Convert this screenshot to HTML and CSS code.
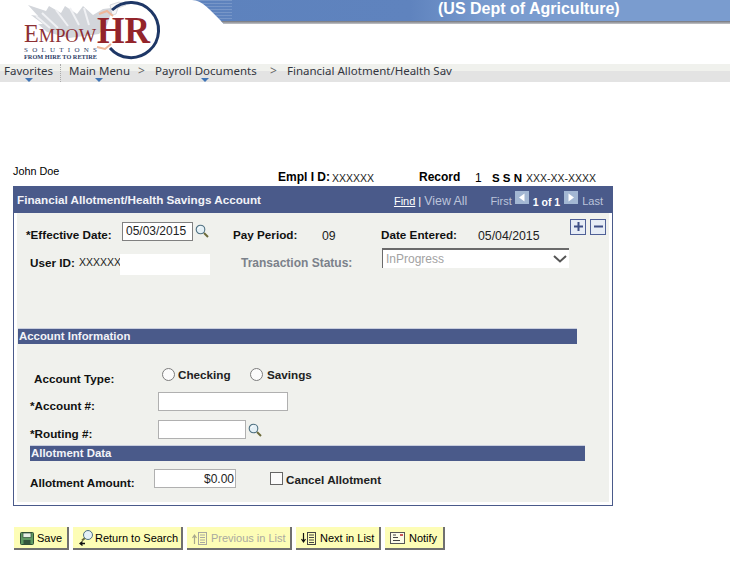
FILE: index.html
```html
<!DOCTYPE html>
<html lang="en">
<head>
<meta charset="utf-8">
<title>Financial Allotment/Health Savings Account</title>
<link rel="stylesheet" href="styles.css">
</head>
<body>
<svg class="defs" width="0" height="0" aria-hidden="true">
  <symbol id="mag" viewBox="0 0 14 14">
    <line x1="9" y1="9" x2="13" y2="13" stroke="#6b6a3a" stroke-width="2"/>
    <circle cx="5.500" cy="5.500" r="4.300" fill="#e4f0f6" stroke="#4d6f80" stroke-width="1.100"/>
    <path d="M3 5a3 3 0 0 1 2.500-2.200" fill="none" stroke="#fff" stroke-width="1"/>
  </symbol>
</svg>

<header class="top">
  <svg class="logo" width="190" height="64" viewBox="0 0 190 64">
    <path class="lg-wing" d="M28 5l18 6 3-5 12 7 4-7 12 8 6-8 10 9 10-6 8-1 6 3-7 5-3 9-8 9-30 4-22-6-9-8 5 0-12-9 7 1z" fill="#d3d6db"/>
    <path class="lg-wing" d="M42 13l16 15M56 10l12 16M70 8l9 17M84 8l5 17M36 16l14 12" stroke="#f0f1f4" stroke-width="2" fill="none"/>
    <path d="M110 5l9-3 7 3-8 3-2 6-4 1z" fill="#f6f6f7" stroke="#c9ccd2" stroke-width=".7"/>
    <path d="M112 10A27.600 27.600 0 1 1 110 48" fill="none" stroke="#1e3766" stroke-width="3"/>
    <path d="M99 14l8-3 6 5M97 47l8 2 6-5" stroke="#eeb79a" stroke-width="2" fill="none"/>
    <text class="lg-empow" x="24" y="42" textLength="72" lengthAdjust="spacingAndGlyphs">E<tspan class="lg-small">MPOW</tspan></text>
    <text class="lg-hr" x="97" y="43" textLength="53" lengthAdjust="spacingAndGlyphs">HR</text>
    <text class="lg-sol" x="24" y="52" textLength="73">SOLUTIONS</text>
    <text class="lg-tag" x="24" y="59" textLength="73" lengthAdjust="spacingAndGlyphs">FROM HIRE TO RETIRE</text>
  </svg>
  <div class="banner"><span class="banner-text">(US Dept of Agriculture)</span></div>
</header>

<nav class="crumbs">
  <span class="crumb c-fav">Favorites<i class="caret"></i></span>
  <span class="crumb c-main">Main Menu<i class="caret"></i></span>
  <span class="sep s-1">&gt;</span>
  <span class="crumb c-pay">Payroll Documents<i class="caret"></i></span>
  <span class="sep s-2">&gt;</span>
  <span class="crumb c-fin">Financial Allotment/Health Sav</span>
</nav>

<main class="page">
  <div class="ident">
    <span class="john">John Doe</span>
    <b class="id-empl">Empl I D:</b>
    <span class="id-val v-empl">XXXXXX</span>
    <b class="id-rec">Record</b>
    <span class="id-num">1</span>
    <b class="id-ssn">S S N</b>
    <span class="id-val">XXX-XX-XXXX</span>
  </div>

  <section class="panel">
    <div class="title">
      <span class="title-text">Financial Allotment/Health Savings Account</span>
      <span class="pager">
        <a class="p-find">Find</a><span class="p-bar">|</span><span class="p-dim p-view">View All</span>
        <span class="p-dim p-first">First</span>
        <span class="p-arrow p-a1"><svg width="14" height="13" viewBox="0 0 14 13"><path d="M9.500 2.500v8L4 6.500z" fill="#fff"/></svg></span>
        <b class="p-count">1 of 1</b>
        <span class="p-arrow p-a2"><svg width="14" height="13" viewBox="0 0 14 13"><path d="M4.500 2.500v8l5.500-4z" fill="#fff"/></svg></span>
        <span class="p-dim p-last">Last</span>
      </span>
    </div>

    <div class="inner">
      <div class="row row-a">
        <label class="lbl w-eff">*Effective Date:</label>
        <input class="fld f-date" value="05/03/2015" readonly>
        <svg class="mag m-date" width="14" height="14"><use href="#mag"/></svg>
        <label class="lbl w-pay">Pay Period:</label>
        <span class="val w-09">09</span>
        <label class="lbl w-ent">Date Entered:</label>
        <span class="val w-dat">05/04/2015</span>
        <span class="tool tool-plus"><svg width="13" height="13" viewBox="0 0 13 13"><path d="M2 6.500h9M6.500 2v9" stroke="#3e4f86" stroke-width="2"/></svg></span>
        <span class="tool tool-minus"><svg width="13" height="13" viewBox="0 0 13 13"><path d="M2 6.500h9" stroke="#3e4f86" stroke-width="2"/></svg></span>
      </div>

      <div class="row row-b">
        <label class="lbl w-uid">User ID:</label>
        <span class="mask w-uval">XXXXXX</span>
        <span class="blank"></span>
        <label class="lbl lbl-off w-ts">Transaction Status:</label>
        <div class="sel">InProgress<svg width="14" height="8" viewBox="0 0 14 8"><path d="M1 1l6 5.500L13 1" fill="none" stroke="#555" stroke-width="2"/></svg></div>
      </div>

      <h2 class="bar bar-acct">Account Information</h2>

      <div class="row row-type">
        <label class="lbl w-type">Account Type:</label>
        <span class="opt o-1"><input type="radio" class="radio" name="t"><b>Checking</b></span>
        <span class="opt o-2"><input type="radio" class="radio" name="t"><b>Savings</b></span>
      </div>

      <div class="row row-num r-acct">
        <label class="lbl w-num">*Account #:</label>
        <input class="fld f-acct" readonly>
      </div>
      <div class="row row-num r-rout">
        <label class="lbl w-num">*Routing #:</label>
        <input class="fld f-rout" readonly>
        <svg class="mag m-rout" width="14" height="14"><use href="#mag"/></svg>
      </div>

      <h2 class="bar bar-allot">Allotment Data</h2>

      <div class="row row-amt">
        <label class="lbl w-amt">Allotment Amount:</label>
        <input class="fld f-amt" value="$0.00" readonly>
        <input type="checkbox" class="check">
        <b class="check-lbl">Cancel Allotment</b>
      </div>
    </div>
  </section>

  <div class="actions">
    <button class="btn b-save">
      <svg width="14" height="13" viewBox="0 0 14 13"><rect x=".5" y=".5" width="13" height="12" rx="1" fill="#5f9a63" stroke="#2f4f36"/><rect x="3" y="1" width="8" height="4.500" fill="#e6efe6" stroke="#2f4f36" stroke-width=".7"/><rect x="3.500" y="8" width="7" height="4.500" fill="#33543c"/></svg>
      Save
    </button>
    <button class="btn b-ret">
      <svg width="15" height="16" viewBox="0 0 15 16"><line x1="6" y1="8" x2="3" y2="10.500" stroke="#6b6a3a" stroke-width="2"/><circle cx="9" cy="5" r="4.500" fill="#e4f0f6" stroke="#4d6f80"/><path d="M6 13.500H1.500M3.500 11.500l-2.500 2 2.500 2" fill="none" stroke="#111" stroke-width="1.300"/></svg>
      Return to Search
    </button>
    <button class="btn btn-off b-prev">
      <svg width="15" height="13" viewBox="0 0 15 13"><path d="M2.500 12V3.500M.5 6l2-3 2 3" fill="none" stroke="#a8a88c" stroke-width="1.200"/><rect x="6.500" y=".5" width="8" height="12" fill="none" stroke="#a8a8a0"/><path d="M8 3h5M8 5.500h5M8 8h5M8 10.500h5" stroke="#a8a8a0"/></svg>
      Previous in List
    </button>
    <button class="btn b-next">
      <svg width="15" height="13" viewBox="0 0 15 13"><path d="M2.500 1v8.500M.5 7l2 3 2-3" fill="none" stroke="#111" stroke-width="1.200"/><rect x="6.500" y=".5" width="8" height="12" fill="none" stroke="#444"/><path d="M8 3h5M8 5.500h5M8 8h5M8 10.500h5" stroke="#444"/></svg>
      Next in List
    </button>
    <button class="btn b-not">
      <svg width="15" height="12" viewBox="0 0 15 12"><rect x=".5" y=".5" width="14" height="11" fill="#fbfbe8" stroke="#555"/><path d="M3 3h3M3 5.500h5M3 8.500h7" stroke="#444"/><rect x="10" y="2" width="3" height="2" fill="#c55"/></svg>
      Notify
    </button>
  </div>
</main>
</body>
</html>
```
FILE: styles.css
```css
* { box-sizing: border-box; }
html, body { margin: 0; padding: 0; background: #fff; }
body { font: 11px "Liberation Sans", Arial, sans-serif; color: #000; overflow: hidden; }
.defs { position: absolute; }

/* header */
.top { display: flex; height: 64px; }
.logo { flex: none; display: block; }
.lg-wing { filter: blur(.4px); }
.lg-empow { font: 25px "Liberation Serif", serif; fill: #8d2f33; }
.lg-small { font-size: 19px; }
.lg-hr { font: bold 38px "Liberation Serif", serif; fill: #93242b; }
.lg-sol { font: 7px "Liberation Serif", serif; fill: #2c3c66; }
.lg-tag { font: bold 5.500px "Liberation Serif", serif; fill: #2c3c66; }
.banner {
  flex: 1; height: 24px; padding-left: 248px;
  clip-path: path("M2 0 C12 0 20 10 32 22 L34 24 L540 24 L540 0 Z");
  background:
    linear-gradient(to bottom, transparent 21px, #70747c 21px, #8e9097 22px, #c4c5c8 24px),
    repeating-linear-gradient(to bottom, rgba(255,255,255,.16) 0 1px, transparent 1px 3px) 0 0 / 42px 21px no-repeat,
    linear-gradient(to right, #5d82bd 0, #5f83be 220px, #7a9ccf 300px, #7a9ccf 100%);
}
.banner-text { display: block; font: bold 16px/17px "Liberation Sans", sans-serif; color: #fff; }

/* breadcrumbs */
.crumbs {
  display: flex; height: 18px;
  font: 11.500px/14px "Noto Sans", Tahoma, sans-serif; color: #33363f;
  background: linear-gradient(to bottom, #f0f1ed 0 7px, #e3e3e3 7px);
}
.crumb { position: relative; white-space: nowrap; height: 18px; }
.caret {
  position: absolute; bottom: 0; left: 50%; margin-left: -4px;
  border: 4px solid transparent; border-bottom: 0; border-top-color: #3f74b5;
}
.sep { font-size: 12px; color: #666; }
.c-fav { margin-left: 4px; width: 57px; border-right: 1px dotted #aaa; }
.c-fav .caret { left: 25px; }
.c-main { margin-left: 8px; width: 69px; }
.c-main .caret { left: 30px; }
.s-1 { width: 17px; }
.c-pay { width: 115px; }
.c-pay .caret { left: 50px; }
.s-2 { width: 17px; }

/* ident row */
.page { display: block; }
.ident { display: flex; height: 22px; margin-top: 82px; padding: 6px 0 0 13px; align-items: flex-start; line-height: 14px; font-size: 10.500px; }
.ident b { font-size: 12px; }
.john { width: 265px; margin-top: -6px; font-size: 10.800px; }
.id-empl { width: 54px; }
.v-empl { width: 87px; }
.id-rec { width: 56px; }
.id-num { width: 17px; font-size: 12px; margin-top: 1px; }
.ident .id-ssn { width: 34px; margin-top: 1px; font-size: 11.500px; }
.id-val { color: #222; margin-top: 1px; }

/* panel */
.panel { width: 600px; height: 320px; margin: 0 0 0 13px; border: 1px solid #4a5a8a; border-top: 0; padding: 0 3px 3px; }
.title { display: flex; height: 27px; margin: 0 -4px; padding: 0 10px 0 4px; background: #4a5a8a; color: #fff; align-items: center; justify-content: space-between; }
.title-text { font: bold 11.700px "Liberation Sans", sans-serif; color: #f2f3f8; margin-top: -1px; }
.pager { display: flex; align-items: center; font-size: 11px; padding-top: 3px; }
.p-find { text-decoration: underline; margin: 0 3px 0 0; }
.p-bar { margin-right: 3px; }
.p-dim { color: #bcc4da; }
.p-view { margin-right: 23px; font-size: 12.400px; }
.p-first { margin-right: 3px; }
.p-arrow { display: block; width: 14px; height: 13px; margin-top: -8px; background: #a3b7d3; }
.p-count { margin: 2px 4px 0; font-size: 10.500px; }
.p-a2 { margin-right: 4px; }

.inner { height: 289px; background: #f0f1ed; padding-top: 8px; font-size: 12px; }
.row { display: flex; align-items: center; }
.lbl { font-weight: bold; font-size: 11.700px; white-space: nowrap; color: #111; }
.lbl-off { color: #7b818a; font-size: 12px; }
.val { font-size: 12.300px; color: #222; }
.fld { display: block; height: 19px; padding: 0 3px; margin: 0; border: 1px solid #b0b0b0; background: #fff; font: 12px "Liberation Sans", sans-serif; color: #222; outline: 0; }
.mag { display: block; flex: none; }

.row-a { height: 20px; padding-left: 9px; }
.row-a .lbl { margin-top: 6px; }
.row-a .val { margin-top: 10px; }
.w-eff { width: 96px; }
.f-date { width: 71px; border-color: #808080; }
.m-date { margin-left: 2px; }
.row-a .w-pay { width: 89px; margin-left: 24px; }
.w-09 { width: 59px; }
.w-ent { width: 97px; }
.w-dat { width: 92px; }
.tool { display: flex; width: 16px; height: 16px; margin-top: -9px; align-items: center; justify-content: center; background: #e6ecf5; border: 1px solid #4f6096; }
.tool-minus { margin-left: 4px; }

.row-b { height: 26px; margin-top: 8px; padding-left: 13px; }
.row-b .lbl { margin-top: 1px; }
.w-uid { width: 49px; }
.mask { font-size: 10.500px; color: #222; }
.w-uval { width: 41px; }
.blank { width: 90px; height: 21px; align-self: flex-end; background: #fff; }
.w-ts { width: 141px; margin-left: 31px; }
.sel { display: flex; align-self: flex-start; align-items: center; justify-content: space-between; width: 187px; height: 20px; margin-top: -1px; padding: 0 2px 0 3px; background: #fff; border-top: 2px solid #6a6a6a; border-left: 1px solid #6a6a6a; color: #a2a2a2; font-size: 12px; }

.bar { height: 16px; margin: 0; background: #4a5a8a; border-top: 1px solid #c9cede; color: #f2f3f8; font: bold 11.400px/14px "Liberation Sans", sans-serif; }
.bar-acct { width: 559px; margin: 53px 0 0 1px; padding-left: 1px; }
.bar-allot { width: 555px; margin: 5px 0 0 13px; padding-left: 1px; }

.row-type { height: 20px; margin-top: 22px; padding-left: 17px; }
.w-type { width: 128px; margin-top: 4px; }
.opt { display: flex; align-items: center; margin-top: -4px; font-size: 11.700px; }
.o-1 { width: 88px; }
.opt b { margin: 1px 0 0 3px; color: #222; }
.radio, .check { appearance: none; -webkit-appearance: none; display: block; flex: none; margin: 0; background: #fbfbfb; border: 1px solid #7c7c7c; }
.radio { width: 13px; height: 13px; border-radius: 50%; }
.o-2 b { margin-left: 4px; }

.row-num { height: 20px; margin-top: 6px; padding-left: 13px; align-items: flex-start; }
.r-rout { margin-top: 8px; }
.w-num { width: 128px; margin-top: 7px; line-height: 14px; }
.f-acct { width: 130px; }
.f-rout { width: 88px; }
.m-rout { margin: 3px 0 0 2px; }

.row-amt { height: 20px; margin-top: 8px; padding-left: 13px; align-items: flex-start; }
.w-amt { width: 124px; margin-top: 7px; line-height: 14px; }
.f-amt { width: 82px; text-align: right; padding-right: 1px; }
.check { width: 13px; height: 13px; margin: 3px 0 0 34px; border-color: #666; }
.check-lbl { margin: 4px 0 0 3px; line-height: 14px; font-size: 11.700px; color: #222; }

/* action buttons */
.actions { display: flex; gap: 4px; margin: 21px 0 0 14px; }
.btn {
  display: flex; align-items: center; gap: 4px; height: 23px; padding: 1px 0 0 5px; margin: 0;
  background: #fdfdb6; border: 0; border-right: 2px solid #707070; border-bottom: 2px solid #707070;
  font: 11px "Liberation Sans", sans-serif; color: #000; white-space: nowrap;
}
.btn-off { color: #a9a9a0; }
.b-save { width: 55px; padding-left: 6px; gap: 3px; }
.b-ret { width: 110px; padding-left: 6px; gap: 1px; }
.b-prev { width: 105px; }
.b-next { width: 85px; }
.b-not { width: 60px; }
```
